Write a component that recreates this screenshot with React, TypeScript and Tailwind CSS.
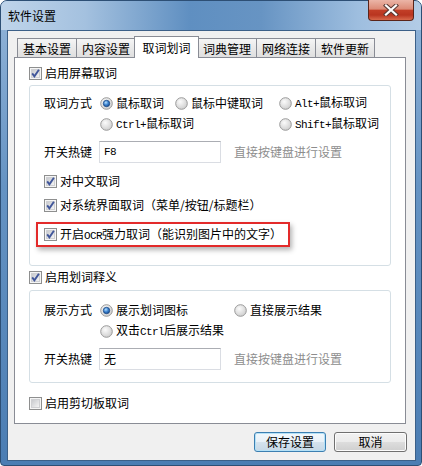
import React, { useId } from 'react';

const cleanId = (s: string) => s.replace(/[^a-zA-Z0-9]/g, '');

const Latin = ({ children }: { children: React.ReactNode }) => (
  <span className="font-['Liberation_Mono',monospace] text-[11px] tracking-[-0.6px]">{children}</span>
);

const CheckBox = ({ checked }: { checked?: boolean }) => {
  const id = 'cb' + cleanId(useId());
  return (
    <svg width="13" height="13" viewBox="0 0 13 13" className="shrink-0">
      <defs>
        <linearGradient id={id} x1="0" y1="0" x2="1" y2="1">
          <stop offset="0" stopColor="#c6c8cc" />
          <stop offset="1" stopColor="#f6f6f6" />
        </linearGradient>
      </defs>
      <rect x="0.5" y="0.5" width="12" height="12" fill="#f5f5f5" stroke="#8e8f8f" />
      <rect x="2.5" y="2.5" width="8" height="8" fill={`url(#${id})`} stroke="#cfd0d3" />
      {checked && (
        <path d="M3.2 6.4 L5.4 9.3 L9.9 2.8" fill="none" stroke="#40569a" strokeWidth="1.9" />
      )}
    </svg>
  );
};

const Radio = ({ checked }: { checked?: boolean }) => {
  const base = 'rd' + cleanId(useId());
  return (
    <svg width="13" height="13" viewBox="0 0 13 13" className="shrink-0">
      <defs>
        <radialGradient id={base + 'a'} cx="0.4" cy="0.35" r="0.75">
          <stop offset="0" stopColor="#fbfbfb" />
          <stop offset="1" stopColor="#c9c9c9" />
        </radialGradient>
        <radialGradient id={base + 'b'} cx="0.4" cy="0.35" r="0.7">
          <stop offset="0" stopColor="#b6e0ff" />
          <stop offset="0.5" stopColor="#3f86d2" />
          <stop offset="1" stopColor="#14498f" />
        </radialGradient>
      </defs>
      <circle cx="6.5" cy="6.5" r="5.8" fill={`url(#${base}a)`} stroke="#9a9a9a" />
      {checked && (
        <circle cx="6.5" cy="6.5" r="3.2" fill={`url(#${base}b)`} stroke="#1b4784" strokeWidth="0.8" />
      )}
    </svg>
  );
};

const RadioOpt = ({
  checked,
  className = '',
  children,
}: {
  checked?: boolean;
  className?: string;
  children: React.ReactNode;
}) => (
  <div className={`flex items-center gap-[3px] ${className}`}>
    <Radio checked={checked} />
    <span>{children}</span>
  </div>
);

const CheckRow = ({
  checked,
  className = '',
  children,
}: {
  checked?: boolean;
  className?: string;
  children: React.ReactNode;
}) => (
  <div className={`flex h-[16px] items-center gap-[3px] ${className}`}>
    <CheckBox checked={checked} />
    <span>{children}</span>
  </div>
);

const HotkeyRow = ({ value, className = '' }: { value: React.ReactNode; className?: string }) => (
  <div className={`flex h-[22px] items-center ${className}`}>
    <span className="w-[55px]">开关热键</span>
    <div className="flex h-[22px] w-[122px] items-center border border-[#dadde3] border-t-[#abadb3] bg-white pl-[4px]">
      {value}
    </div>
    <span className="ml-[13px] text-[#8d8d8d]">直接按键盘进行设置</span>
  </div>
);

const tabs = ['基本设置', '内容设置', '取词划词', '词典管理', '网络连接', '软件更新'];

export default function App() {
  return (
    <div className="h-[466px] w-[422px] bg-white font-['Noto_Sans_CJK_SC',sans-serif] text-[12px] leading-[16px] text-black">
      <div className="flex h-[466px] w-[422px] flex-col rounded-t-[7px] rounded-b-[4px] border border-[#2d4f75] bg-[linear-gradient(to_bottom,#93b5d9,#6593c3_40%,#4b7db3)]">
        {/* title bar */}
        <div className="flex h-[29px] shrink-0 rounded-t-[6px] bg-[linear-gradient(to_right,#bfd4ea_0%,#a4c1df_20%,#5f8fc1_45%,#6794c3_62%,#9ebedf_85%,#b3cce6_100%)]">
          <span className="self-center pl-[7px]">软件设置</span>
          <div className="mr-[7px] -mt-px ml-auto flex h-[21px] w-[46px] items-center justify-center self-start rounded-b-[4px] border border-t-0 border-[#5a2419] bg-[linear-gradient(to_bottom,#ebb5a7_0%,#dc8b77_45%,#c23e27_52%,#b93520_75%,#d8694c_100%)]">
            <svg width="16" height="12" viewBox="0 0 16 12">
              <path d="M3 1.5 L13 10.5 M13 1.5 L3 10.5" stroke="#5b3a34" strokeWidth="4.2" strokeLinecap="square" />
              <path d="M3 1.5 L13 10.5 M13 1.5 L3 10.5" stroke="#ffffff" strokeWidth="2.2" strokeLinecap="square" />
            </svg>
          </div>
        </div>

        {/* client area */}
        <div className="mb-[4px] ml-[6px] mr-[5px] flex flex-1 flex-col border border-[#3c6088] bg-[#f0f0f0]">
          {/* tabs */}
          <div className="mt-[5px] flex h-[21px] items-end pl-[9px]">
            {tabs.map((t, i) => {
              const sel = i === 2;
              const ml = i === 0 ? '' : i === 2 || i === 3 ? '-ml-[2px]' : '-ml-px';
              return sel ? (
                <div
                  key={t}
                  className={`relative z-10 -mb-px flex h-[22px] w-[65px] items-center justify-center border border-b-0 border-[#898c95] bg-white ${ml}`}
                >
                  {t}
                </div>
              ) : (
                <div
                  key={t}
                  className={`flex h-[19px] w-[60px] items-center justify-center border border-b-0 border-[#898c95] bg-[linear-gradient(to_bottom,#f5f5f5,#e9e9e9_50%,#dfdfdf)] pt-[2px] ${ml}`}
                >
                  {t}
                </div>
              );
            })}
          </div>

          {/* panel */}
          <div className="ml-[6px] flex h-[367px] w-[392px] flex-col border border-[#898c95] bg-white px-[14px]">
            <CheckRow checked className="mt-[7px]">
              启用屏幕取词
            </CheckRow>

            <div className="mt-[4px] flex flex-col rounded-[3px] border border-[#d5dfe5] pb-[18px] pl-[14px]">
              <div className="mt-[9px] flex h-[16px] items-center">
                <span className="w-[56px]">取词方式</span>
                <RadioOpt checked className="w-[75px]">
                  鼠标取词
                </RadioOpt>
                <RadioOpt className="w-[104px]">鼠标中键取词</RadioOpt>
                <RadioOpt>
                  <Latin>Alt+</Latin>鼠标取词
                </RadioOpt>
              </div>
              <div className="mt-[5px] flex h-[16px] items-center pl-[56px]">
                <RadioOpt className="w-[179px]">
                  <Latin>Ctrl+</Latin>鼠标取词
                </RadioOpt>
                <RadioOpt>
                  <Latin>Shift+</Latin>鼠标取词
                </RadioOpt>
              </div>
              <HotkeyRow className="mt-[9px]" value={<Latin>F8</Latin>} />
              <CheckRow checked className="mt-[10px]">
                对中文取词
              </CheckRow>
              <CheckRow checked className="mt-[8px]">
                对系统界面取词（菜单/按钮/标题栏）
              </CheckRow>
              <div className="-ml-[8px] mt-[9px] flex h-[25px] w-[254px] items-center border-2 border-[#e32a2a] pl-[6px] shadow-[2px_3px_5px_rgba(0,0,0,0.3)]">
                <CheckRow checked>
                  开启<Latin>OCR</Latin>强力取词（能识别图片中的文字）
                </CheckRow>
              </div>
            </div>

            <CheckRow checked className="mt-[3px]">
              启用划词释义
            </CheckRow>

            <div className="mt-[5px] flex flex-col rounded-[3px] border border-[#d5dfe5] pb-[12px] pl-[14px]">
              <div className="mt-[11px] flex h-[16px] items-center">
                <span className="w-[56px]">展示方式</span>
                <RadioOpt checked className="w-[134px]">
                  展示划词图标
                </RadioOpt>
                <RadioOpt>直接展示结果</RadioOpt>
              </div>
              <div className="mt-[5px] flex h-[16px] items-center pl-[56px]">
                <RadioOpt>
                  双击<Latin>Ctrl</Latin>后展示结果
                </RadioOpt>
              </div>
              <HotkeyRow className="mt-[9px]" value="无" />
            </div>

            <CheckRow className="mt-[12px]">启用剪切板取词</CheckRow>
          </div>

          {/* buttons */}
          <div className="mt-[8px] flex justify-end gap-[8px] pr-[8px]">
            <button className="flex h-[20px] w-[72px] items-center justify-center rounded-[3px] border border-[#3c7fb1] bg-[linear-gradient(to_bottom,#f2f8fc,#e8f1f8_50%,#d5e3ee_50%,#c6d8e6)] shadow-[inset_0_0_0_1px_#b4e1f7]">
              保存设置
            </button>
            <button className="flex h-[20px] w-[73px] items-center justify-center rounded-[3px] border border-[#707070] bg-[linear-gradient(to_bottom,#f2f2f2,#ebebeb_50%,#dddddd_50%,#cfcfcf)] shadow-[inset_0_0_0_1px_#fcfcfc]">
              取消
            </button>
          </div>
        </div>
      </div>
    </div>
  );
}
